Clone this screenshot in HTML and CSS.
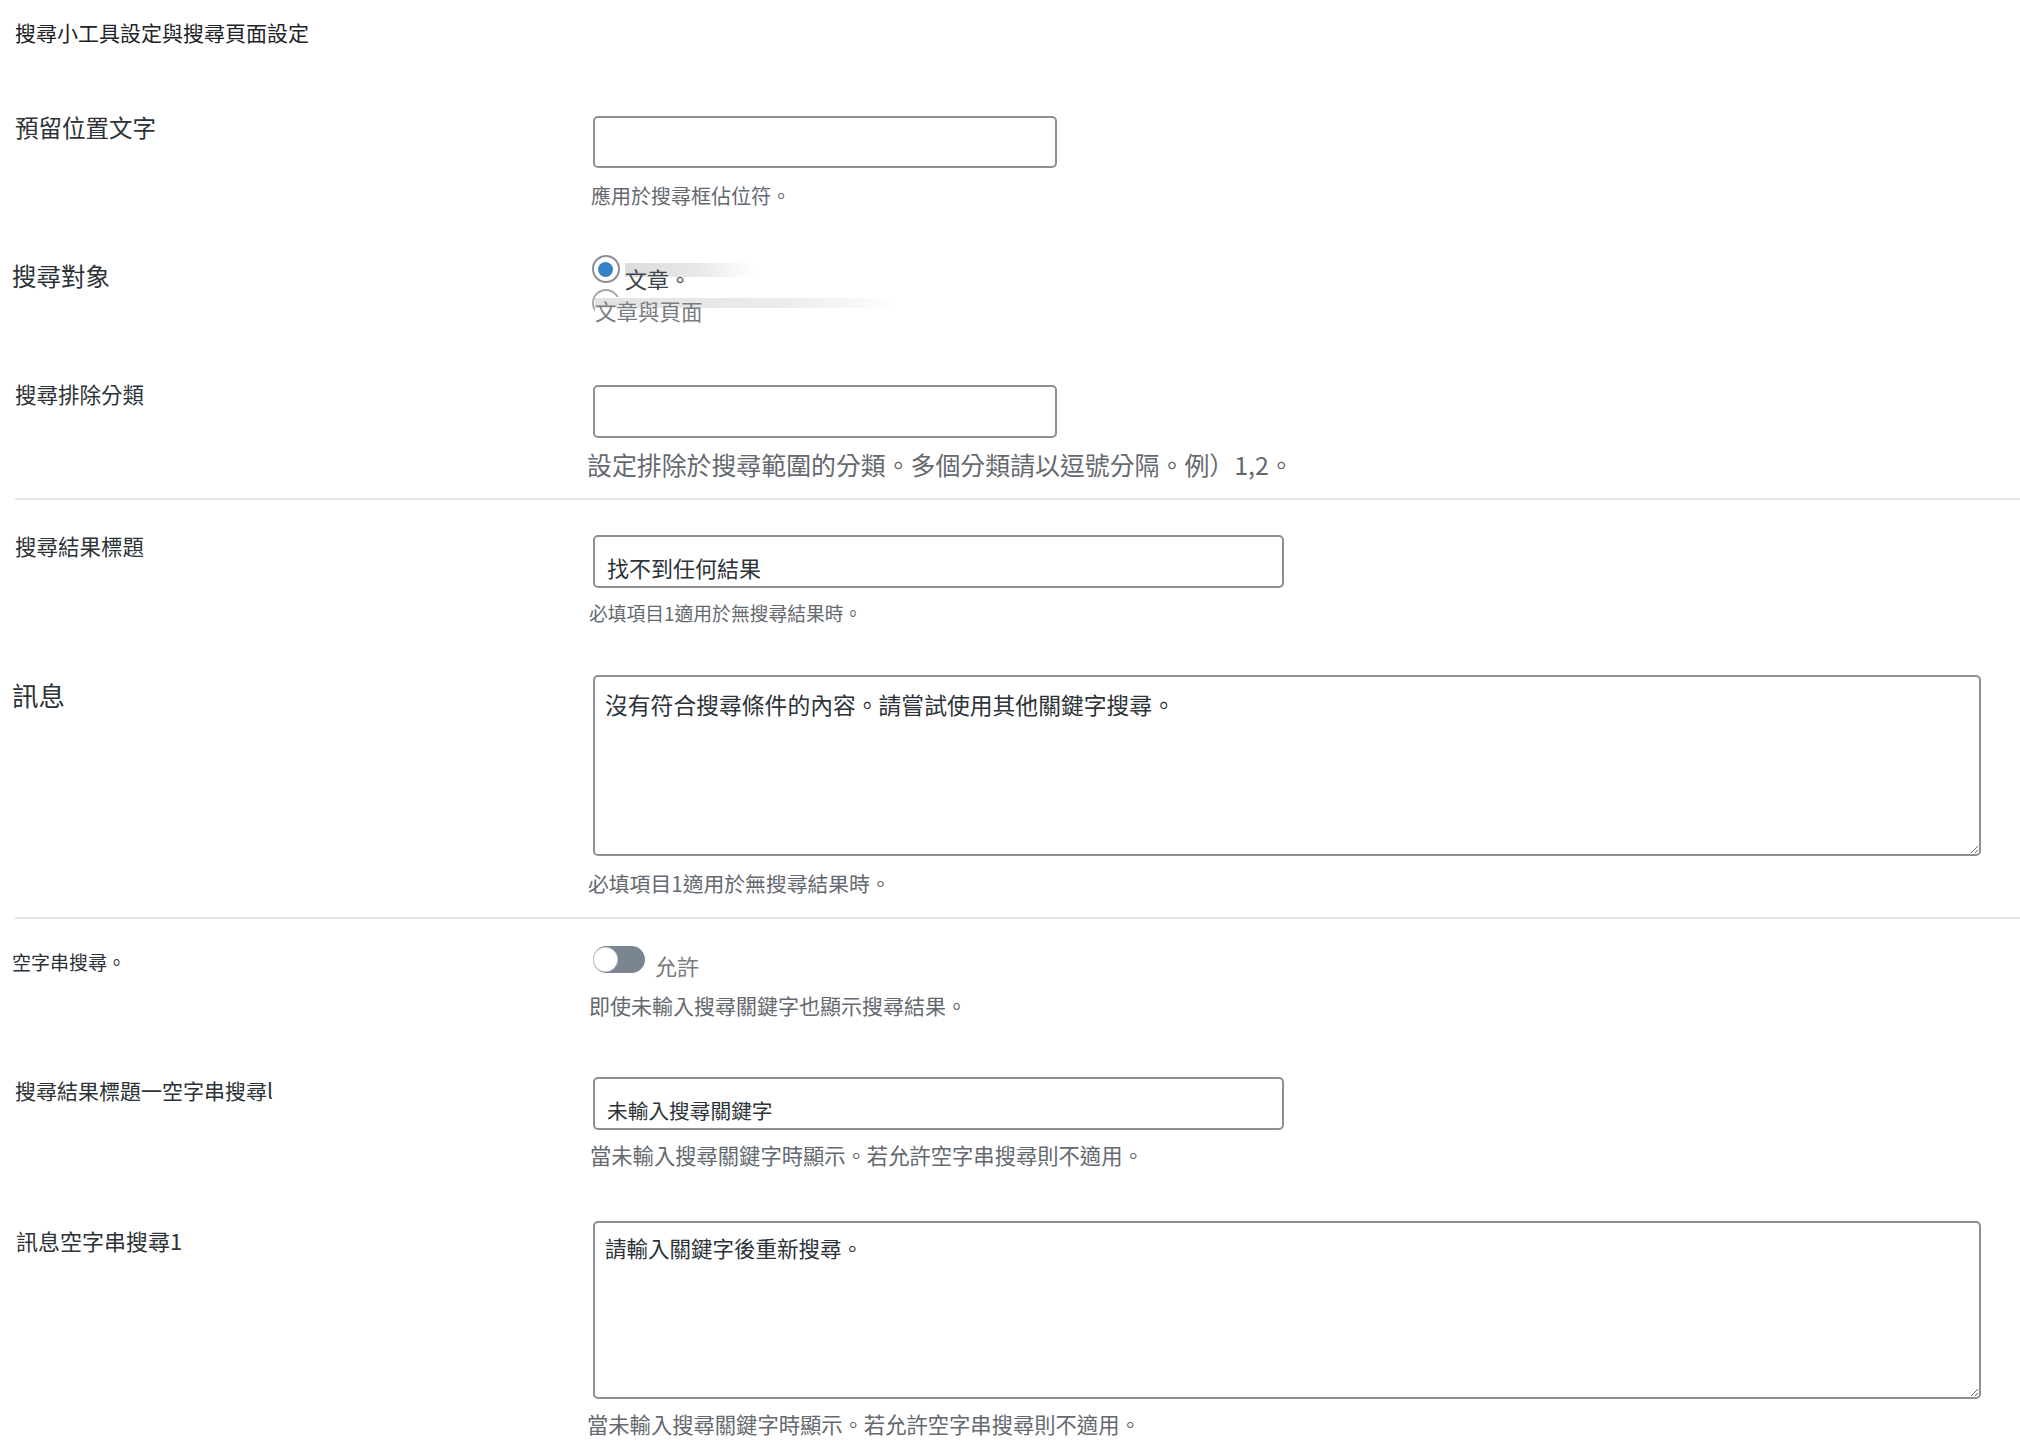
FILE: index.html
```html
<!DOCTYPE html>
<html lang="zh-Hant">
<head>
    <meta charset="UTF-8">
    <meta name="viewport" content="width=device-width, initial-scale=1.0">
    <title>搜尋設定</title>
    <link rel="stylesheet" href="styles.css">
</head>
<body>
    <div class="settings">
        <h2 class="section-title">搜尋小工具設定與搜尋頁面設定</h2>

        <div class="form-row row-placeholder">
            <label class="form-label" for="placeholder">預留位置文字</label>
            <div class="form-field">
                <input class="text-input narrow" type="text" id="placeholder">
                <p class="description">應用於搜尋框佔位符。</p>
            </div>
        </div>

        <div class="form-row row-target">
            <div class="form-label">搜尋對象</div>
            <div class="form-field">
                <label class="radio-option is-checked">
                    <span class="radio-mark"></span>
                    <span class="radio-text">文章。</span>
                </label>
                <label class="radio-option">
                    <span class="radio-mark"></span>
                    <span class="radio-text">文章與頁面</span>
                </label>
            </div>
        </div>

        <div class="form-row row-exclude">
            <label class="form-label" for="exclude">搜尋排除分類</label>
            <div class="form-field">
                <input class="text-input narrow" type="text" id="exclude">
                <p class="description">設定排除於搜尋範圍的分類。多個分類請以逗號分隔。例）1,2。</p>
            </div>
        </div>

        <div class="divider"></div>

        <div class="form-row row-title">
            <label class="form-label" for="result-title">搜尋結果標題</label>
            <div class="form-field">
                <input class="text-input wide" type="text" id="result-title" value="找不到任何結果">
                <p class="description">必填項目1適用於無搜尋結果時。</p>
            </div>
        </div>

        <div class="form-row row-message">
            <label class="form-label" for="result-message">訊息</label>
            <div class="form-field">
                <textarea class="text-area" id="result-message">沒有符合搜尋條件的內容。請嘗試使用其他關鍵字搜尋。</textarea>
                <p class="description">必填項目1適用於無搜尋結果時。</p>
            </div>
        </div>

        <div class="divider divider-lower"></div>

        <div class="form-row row-empty">
            <div class="form-label">空字串搜尋。</div>
            <div class="form-field">
                <label class="switch-row">
                    <span class="switch"></span>
                    <span class="switch-text">允許</span>
                </label>
                <p class="description">即使未輸入搜尋關鍵字也顯示搜尋結果。</p>
            </div>
        </div>

        <div class="form-row row-empty-title">
            <label class="form-label" for="empty-title">搜尋結果標題一空字串搜尋l</label>
            <div class="form-field">
                <input class="text-input wide" type="text" id="empty-title" value="未輸入搜尋關鍵字">
                <p class="description">當未輸入搜尋關鍵字時顯示。若允許空字串搜尋則不適用。</p>
            </div>
        </div>

        <div class="form-row row-empty-message">
            <label class="form-label" for="empty-message">訊息空字串搜尋1</label>
            <div class="form-field">
                <textarea class="text-area" id="empty-message">請輸入關鍵字後重新搜尋。</textarea>
                <p class="description">當未輸入搜尋關鍵字時顯示。若允許空字串搜尋則不適用。</p>
            </div>
        </div>
    </div>
</body>
</html>
```

FILE: styles.css
```css
:root {
    --wp-text: #1d2327;
    --wp-field-text: #2c3338;
    --wp-muted: #646970;
    --wp-border: #8c8f94;
    --wp-blue: #3582c4;
    --wp-divider: #e4e4e6;
}

* {
    box-sizing: border-box;
}

body {
    margin: 0;
    background-color: #fff;
    color: var(--wp-text);
    font-family: "Noto Sans CJK TC", "Noto Sans", sans-serif;
}

.settings {
    padding: 18px 0 40px 15px;
}

.section-title {
    margin: 0;
    font-size: 21px;
    line-height: 28px;
    font-weight: 400;
}

/* two column rows: label on the left, control + help text on the right */
.form-row {
    display: grid;
    grid-template-columns: 578px 1fr;
    align-items: start;
}

.form-label {
    font-size: 21.5px;
    line-height: 28px;
    color: #2c3338;
}

.form-field {
    display: flex;
    flex-direction: column;
    align-items: flex-start;
}

.text-input {
    height: 53px;
    border: 2px solid var(--wp-border);
    border-radius: 5px;
    padding: 10px 12px 0;
    font-family: inherit;
    font-size: 22px;
    color: var(--wp-field-text);
    background: #fff;
    outline: none;
}

.text-input.narrow {
    width: 464px;
}

.text-input.wide {
    width: 691px;
}

.text-area {
    width: 1388px;
    border: 2px solid var(--wp-border);
    border-radius: 5px;
    padding: 13px 10px;
    font-family: inherit;
    color: var(--wp-field-text);
    resize: vertical;
    outline: none;
}

.description {
    margin: 13px 0 0 -3px;
    color: var(--wp-muted);
    font-size: 20px;
    line-height: 28px;
}

.divider {
    height: 2px;
    margin-top: 18px;
    background-color: var(--wp-divider);
}

.divider-lower {
    margin-top: 20px;
}

/* radio list */
.radio-option {
    display: flex;
    align-items: flex-start;
}

.radio-mark {
    flex: none;
    position: relative;
    width: 28px;
    height: 28px;
    margin-left: -1px;
    border: 2px solid var(--wp-border);
    border-radius: 50%;
    background: #fff;
}

.radio-option.is-checked .radio-mark::after {
    content: "";
    position: absolute;
    left: 4px;
    top: 5px;
    width: 15px;
    height: 15px;
    border-radius: 50%;
    background-color: var(--wp-blue);
}

.radio-text {
    position: relative;
    margin: 8px 0 0 5px;
    padding-right: 64px;
    font-size: 22px;
    line-height: 30px;
    color: #3c434a;
    background: linear-gradient(to right, #dcdcdc, #e8e8e8 55%, rgba(255, 255, 255, 0)) 0 0 / 100% 14px no-repeat;
}

.radio-option + .radio-option {
    margin-top: -4px;
}

.radio-option + .radio-option .radio-mark {
    border-color: #a7aaad;
}

.radio-option + .radio-option .radio-text {
    margin-left: -25px;
    padding-right: 197px;
    font-size: 21.5px;
    line-height: 28px;
    color: #787c82;
    background:
        linear-gradient(to right, #e2e2e2, #ebebeb 60%, rgba(255, 255, 255, 0)) 0 1px / 100% 10px no-repeat,
        linear-gradient(to right, #fff, #fff) 0 0 / 100% 100% no-repeat;
}

/* toggle switch */
.switch-row {
    display: flex;
    align-items: flex-start;
}

.switch {
    position: relative;
    width: 52px;
    height: 27px;
    border-radius: 14px;
    background-color: #7b8591;
}

.switch::before {
    content: "";
    position: absolute;
    left: 1px;
    top: 2px;
    width: 23px;
    height: 23px;
    border-radius: 50%;
    background: #fff;
    box-shadow: 0 0 0 1px #d0d3d6;
}

.switch-text {
    margin: 4px 0 0 10px;
    font-size: 22px;
    line-height: 30px;
    color: #787c82;
}

/* per row spacing */
.row-placeholder {
    margin-top: 66px;
}

.row-placeholder .form-label {
    font-size: 23.5px;
    line-height: 30px;
}

.row-placeholder .form-field {
    padding-top: 4px;
}

.row-placeholder .text-input {
    height: 52px;
}

.row-placeholder .description {
    margin-top: 15px;
    margin-left: -2px;
    line-height: 26px;
}

.row-target {
    margin-top: 46px;
}

.row-target .form-label {
    margin-left: -3px;
    padding-top: 5px;
    font-size: 24.5px;
    line-height: 32px;
}

.row-exclude {
    margin-top: 55px;
}

.row-exclude .form-field {
    padding-top: 5px;
}

.row-exclude .description {
    margin-top: 10px;
    margin-left: -6px;
    font-size: 24.9px;
    line-height: 32px;
}

.row-title {
    margin-top: 32px;
}

.row-title .form-field {
    padding-top: 3px;
}

.row-title .description {
    margin-left: -4px;
    font-size: 18.8px;
    line-height: 24px;
}

.row-message {
    margin-top: 50px;
}

.row-message .form-label {
    margin-left: -3px;
    padding-top: 3px;
    font-size: 26.5px;
    line-height: 34px;
}

.row-message .text-area {
    height: 181px;
    font-size: 22.8px;
    line-height: 30px;
}

.row-message .description {
    margin-left: -5px;
    font-size: 20.8px;
}

.row-empty {
    margin-top: 27px;
}

.row-empty .form-label {
    margin-left: -3px;
    padding-top: 3px;
    font-size: 19px;
    line-height: 26px;
}

.row-empty .description {
    margin-top: 11px;
    margin-left: -4px;
    font-size: 21px;
}

.row-empty-title {
    margin-top: 57px;
}

.row-empty-title .form-label {
    font-size: 21px;
}

.row-empty-title .form-field {
    padding-top: 1px;
}

.row-empty-title .text-input {
    padding-top: 13px;
    font-size: 20.7px;
}

.row-empty-title .description {
    margin-top: 11px;
    font-size: 21.3px;
}

.row-empty-message {
    margin-top: 52px;
}

.row-empty-message .form-label {
    margin-left: 1px;
    padding-top: 5px;
    font-size: 22px;
}

.row-empty-message .text-area {
    height: 178px;
    padding-top: 11px;
    font-size: 21.5px;
    line-height: 28px;
}

.row-empty-message .description {
    margin-top: 11px;
    margin-left: -6px;
    font-size: 21.3px;
}
```
